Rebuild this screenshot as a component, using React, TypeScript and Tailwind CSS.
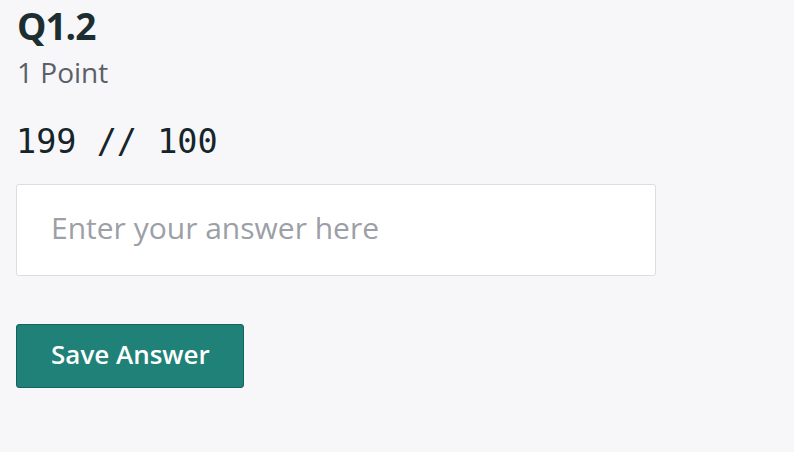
import React, { useState } from 'react';

export default function App() {
  const [answer, setAnswer] = useState('');

  return (
    <div className="w-[794px] h-[452px] bg-[#f7f7f9] pl-4 pt-1 font-['Open_Sans','Lato',sans-serif]">
      {/* Question header */}
      <h1 className="pl-px text-[37px] leading-[44px] font-bold tracking-[-1px] text-[#1c2e30]">Q1.2</h1>
      <p className="mt-2 pl-px text-[28px] leading-[32px] text-[#5b6066]">1 Point</p>

      <pre className="mt-[34px] font-['DejaVu_Sans_Mono',monospace] text-[33.5px] leading-[40px] text-[#16252a]">
        199 // 100
      </pre>

      <form
        onSubmit={(e) => e.preventDefault()}
        className="flex flex-col items-start"
      >
        <input
          type="text"
          placeholder="Enter your answer here"
          value={answer}
          onChange={(e) => setAnswer(e.target.value)}
          className="mt-[22px] w-[640px] h-[92px] bg-white border border-[#dcdde0] rounded-[3px] pl-[34px] pb-[5px] text-[30px] text-[#1c2e30] placeholder:text-[#9ca0a6] outline-none"
        />
        <button
          type="submit"
          className="mt-[48px] w-[228px] h-[64px] bg-[#1f8177] border border-[#17625a] rounded-[3px] pl-[34px] pb-[4px] text-left text-[26px] font-semibold text-white"
        >
          Save Answer
        </button>
      </form>
    </div>
  );
}
